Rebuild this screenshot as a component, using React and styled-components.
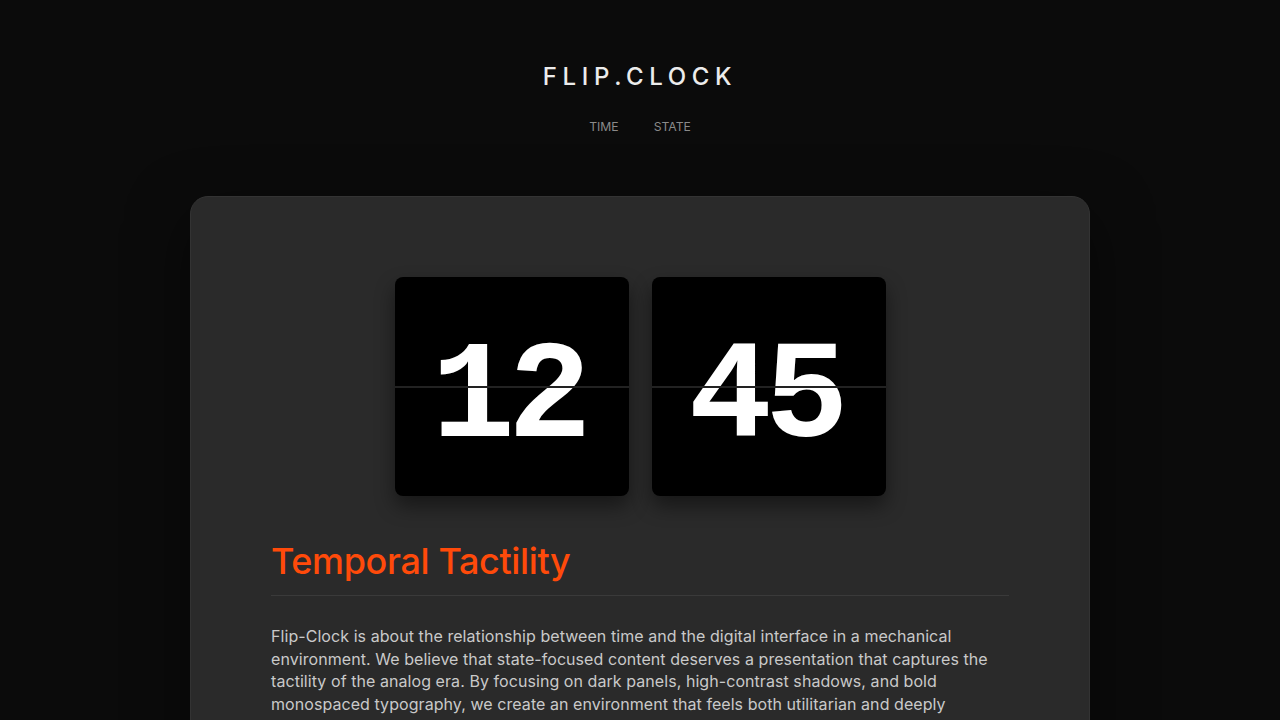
import React from "react";
import styled, { createGlobalStyle } from "styled-components";

const Global = createGlobalStyle`
  html, body { margin: 0; padding: 0; background: #0b0b0b; }
  body { font-family: "Inter", sans-serif; color: #e8e8e8; }
  * { box-sizing: border-box; }
`;

const Page = styled.div`
  min-height: 720px;
  background: #0b0b0b;
  display: flex;
  flex-direction: column;
  align-items: center;
`;

const Header = styled.header`
  display: flex;
  flex-direction: column;
  align-items: center;
  padding-top: 62px;
`;

const Logo = styled.h1`
  margin: 0;
  font-family: "Inter", sans-serif;
  font-weight: 500;
  font-size: 24px;
  line-height: 30px;
  letter-spacing: 0.235em;
  color: #ececec;
`;

const Nav = styled.nav`
  display: flex;
  gap: 35px;
  margin-top: 27px;
`;

const NavLink = styled.a`
  font-family: "Inter", sans-serif;
  font-size: 12.2px;
  line-height: 16px;
  color: #8a8a8a;
  text-decoration: none;
`;

const Card = styled.main`
  margin-top: 61px;
  width: 900px;
  background: #2a2a2a;
  border: 1px solid #333;
  border-radius: 18px;
  padding: 80px 80px 40px;
  box-shadow: 0 20px 60px rgba(0, 0, 0, 0.5);
`;

const Clock = styled.div`
  display: flex;
  justify-content: center;
  gap: 23px;
`;

const Panel = styled.div`
  position: relative;
  width: 234px;
  height: 219px;
  background: #000;
  border-radius: 8px;
  display: flex;
  align-items: center;
  justify-content: center;
  box-shadow: 0 10px 20px rgba(0, 0, 0, 0.45);
  overflow: hidden;
  &::after {
    content: "";
    position: absolute;
    left: 0;
    right: 0;
    top: 109px;
    height: 2px;
    background: #222;
  }
`;

const Digits = styled.span`
  font-family: "Liberation Mono", monospace;
  font-weight: 700;
  font-size: 139px;
  line-height: 1;
  color: #fff;
  letter-spacing: -0.05em;
  padding-right: 0.05em;
  margin-top: 26px;
`;

const Article = styled.section`
  margin-top: 43px;
`;

const Title = styled.h2`
  margin: 0;
  font-family: "Inter", sans-serif;
  font-weight: 500;
  font-size: 36px;
  line-height: 44px;
  letter-spacing: -0.01em;
  color: #ff4a0a;
  padding-bottom: 12px;
  border-bottom: 1px solid #3a3a3a;
`;

const Body = styled.p`
  margin: 29px 0 0;
  font-family: "Inter", sans-serif;
  font-size: 16px;
  line-height: 22.5px;
  letter-spacing: 0.004em;
  color: #c9c9c9;
`;

export default function App() {
  return (
    <>
      <Global />
      <Page>
        <Header>
          <Logo>FLIP.CLOCK</Logo>
          <Nav>
            <NavLink href="#">TIME</NavLink>
            <NavLink href="#">STATE</NavLink>
          </Nav>
        </Header>
        <Card>
          <Clock>
            <Panel><Digits>12</Digits></Panel>
            <Panel><Digits>45</Digits></Panel>
          </Clock>
          <Article>
            <Title>Temporal Tactility</Title>
            <Body>
              Flip-Clock is about the relationship between time and the digital interface in a mechanical
              environment. We believe that state-focused content deserves a presentation that captures the
              tactility of the analog era. By focusing on dark panels, high-contrast shadows, and bold
              monospaced typography, we create an environment that feels both utilitarian and deeply
              personal.
            </Body>
          </Article>
        </Card>
      </Page>
    </>
  );
}
